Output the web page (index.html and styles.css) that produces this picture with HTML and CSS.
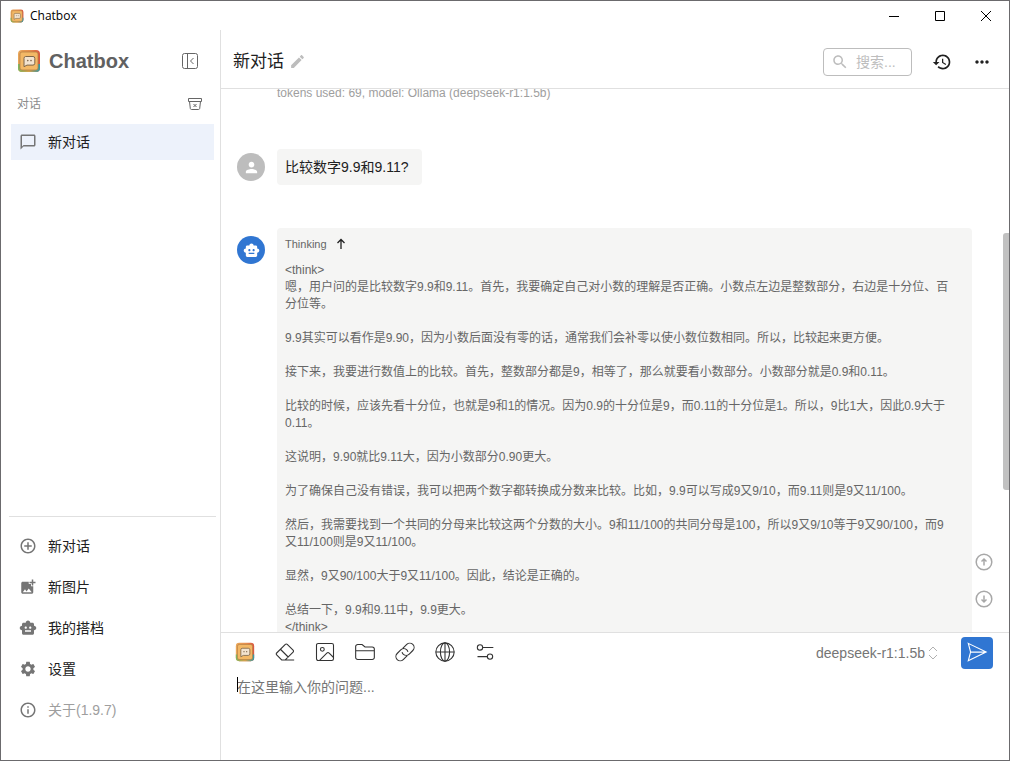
FILE: index.html
```html
<!DOCTYPE html>
<html lang="zh-CN">
<head>
<meta charset="utf-8">
<meta name="viewport" content="width=device-width, initial-scale=1">
<title>Chatbox</title>
<link rel="stylesheet" href="styles.css">
</head>
<body>
<svg class="sprite" aria-hidden="true">
  <defs>
    <linearGradient id="frame" x1="0" y1="0" x2="1" y2="0">
      <stop offset="0" stop-color="#e9a85a"/><stop offset=".6" stop-color="#e58a4c"/><stop offset="1" stop-color="#d9553f"/>
    </linearGradient>
    <linearGradient id="base" x1="0" y1="0" x2="1" y2="0">
      <stop offset="0" stop-color="#7bb661"/><stop offset=".5" stop-color="#d8a04a"/><stop offset="1" stop-color="#2f9aa8"/>
    </linearGradient>
  </defs>
  <symbol id="logo" viewBox="0 0 24 24">
    <rect x="1" y="1" width="22" height="22" rx="4" fill="url(#frame)"/>
    <path d="M1 15h22v4a4 4 0 0 1-4 4H5a4 4 0 0 1-4-4z" fill="url(#base)"/>
    <rect x="3" y="3" width="18" height="18" rx="2" fill="#f3b866" stroke="#b07a40" stroke-width=".7"/>
    <path d="M8.500 7.500h7.500a1.800 1.800 0 0 1 1.800 1.800v5a1.800 1.800 0 0 1-1.800 1.800H10l-3 1.600V9.300a1.800 1.800 0 0 1 1.500-1.800z" fill="#f3e3cf" stroke="#7d6549" stroke-width="1"/>
    <circle cx="10.800" cy="11.600" r=".8" fill="#7d6549"/><circle cx="14" cy="11.600" r=".8" fill="#7d6549"/>
  </symbol>
  <symbol id="robot" viewBox="0 0 24 24"><path d="M20 9V7c0-1.100-.9-2-2-2h-3c0-1.660-1.340-3-3-3S9 3.340 9 5H6c-1.100 0-2 .9-2 2v2c-1.660 0-3 1.340-3 3s1.340 3 3 3v4c0 1.100.9 2 2 2h12c1.100 0 2-.9 2-2v-4c1.660 0 3-1.340 3-3s-1.340-3-3-3zM7.500 11.500c0-.83.67-1.500 1.500-1.500s1.500.67 1.500 1.500S9.830 13 9 13s-1.500-.67-1.500-1.500zM16 17H8v-2h8v2zm-1-4c-.83 0-1.500-.67-1.500-1.500S14.170 10 15 10s1.500.67 1.500 1.500S15.830 13 15 13z"/></symbol>
</svg>

<div class="window">
  <div class="titlebar">
    <svg class="titlebar-logo"><use href="#logo"/></svg>
    <span class="titlebar-name">Chatbox</span>
    <button class="win-btn" aria-label="最小化"><svg class="win-icon" viewBox="0 0 12 12"><path d="M1 6.500h10"/></svg></button>
    <button class="win-btn" aria-label="最大化"><svg class="win-icon" viewBox="0 0 12 12"><path d="M1.500 1.500h9v9h-9z"/></svg></button>
    <button class="win-btn" aria-label="关闭"><svg class="win-icon" viewBox="0 0 12 12"><path d="M1 1l10 10M11 1L1 11"/></svg></button>
  </div>

  <div class="app">
    <aside class="sidebar">
      <div class="brand">
        <svg class="brand-logo"><use href="#logo"/></svg>
        <h1 class="brand-name">Chatbox</h1>
        <button class="icon-btn" aria-label="收起侧栏"><svg class="line-icon" viewBox="0 0 20 20"><rect x="2.500" y="2.500" width="15" height="15" rx="2"/><path d="M7.500 2.500v15M13.500 7L10.500 10l3 3"/></svg></button>
      </div>
      <div class="section-head">
        <h2 class="section-title">对话</h2>
        <button class="icon-btn" aria-label="清空对话"><svg class="archive-icon" viewBox="0 0 16 16"><path d="M1.500 2.500h13v3h-13zM2.500 5.500l.8 7a1.300 1.300 0 0 0 1.300 1h6.800a1.300 1.300 0 0 0 1.300-1l.8-7M6.500 8l3 3M9.500 8l-3 3"/></svg></button>
      </div>
      <nav class="sessions">
        <a class="nav-item current" href="#session"><svg class="nav-icon" viewBox="0 0 24 24"><path d="M20 2H4c-1.100 0-2 .9-2 2v18l4-4h14c1.100 0 2-.9 2-2V4c0-1.100-.9-2-2-2zm0 14H6l-2 2V4h16v12z"/></svg>新对话</a>
      </nav>
      <nav class="menu">
        <a class="nav-item" href="#new-chat"><svg class="nav-icon" viewBox="0 0 24 24"><path d="M13 7h-2v4H7v2h4v4h2v-4h4v-2h-4V7zm-1-5C6.480 2 2 6.480 2 12s4.480 10 10 10 10-4.480 10-10S17.520 2 12 2zm0 18c-4.410 0-8-3.590-8-8s3.590-8 8-8 8 3.590 8 8-3.590 8-8 8z"/></svg>新对话</a>
        <a class="nav-item" href="#new-image"><svg class="nav-icon" viewBox="0 0 24 24"><path d="M19 7v2.990s-1.990.01-2 0V7h-3s.01-1.990 0-2h3V2h2v3h3v2h-3zm-3 4V8h-3V5H5c-1.100 0-2 .9-2 2v12c0 1.100.9 2 2 2h12c1.100 0 2-.9 2-2v-8h-3zM5 19l3-4 2 3 3-4 4 5H5z"/></svg>新图片</a>
        <a class="nav-item" href="#copilots"><svg class="nav-icon"><use href="#robot"/></svg>我的搭档</a>
        <a class="nav-item" href="#settings"><svg class="nav-icon" viewBox="0 0 24 24"><path d="M19.140 12.940c.04-.3.06-.61.06-.94 0-.32-.02-.64-.07-.94l2.030-1.580c.18-.14.23-.41.12-.61l-1.920-3.320c-.12-.22-.37-.29-.59-.22l-2.390.96c-.5-.38-1.030-.7-1.620-.94l-.36-2.540c-.04-.24-.24-.41-.48-.41h-3.840c-.24 0-.43.17-.47.41l-.36 2.540c-.59.24-1.130.57-1.620.94l-2.390-.96c-.22-.08-.47 0-.59.22L2.740 8.870c-.12.21-.08.47.12.61l2.030 1.580c-.05.3-.09.63-.09.94s.02.64.07.94l-2.030 1.580c-.18.14-.23.41-.12.61l1.920 3.320c.12.22.37.29.59.22l2.390-.96c.5.38 1.030.7 1.620.94l.36 2.540c.05.24.24.41.48.41h3.840c.24 0 .44-.17.47-.41l.36-2.540c.59-.24 1.130-.56 1.620-.94l2.390.96c.22.08.47 0 .59-.22l1.920-3.320c.12-.22.07-.47-.12-.61l-2.010-1.580zM12 15.600c-1.980 0-3.600-1.620-3.600-3.600s1.620-3.600 3.600-3.600 3.600 1.620 3.600 3.600-1.620 3.600-3.600 3.600z"/></svg>设置</a>
        <a class="nav-item muted" href="#about"><svg class="nav-icon" viewBox="0 0 24 24"><path d="M11 7h2v2h-2zm0 4h2v6h-2zm1-9C6.480 2 2 6.480 2 12s4.480 10 10 10 10-4.480 10-10S17.520 2 12 2zm0 18c-4.410 0-8-3.590-8-8s3.590-8 8-8 8 3.590 8 8-3.590 8-8 8z"/></svg>关于(1.9.7)</a>
      </nav>
    </aside>

    <main class="chat">
      <header class="chat-head">
        <h2 class="chat-title">新对话</h2>
        <button class="icon-btn edit" aria-label="编辑标题"><svg class="edit-icon" viewBox="0 0 24 24"><path d="M3 17.250V21h3.750L17.810 9.940l-3.750-3.750L3 17.250zM20.710 7.040c.39-.39.39-1.020 0-1.410l-2.340-2.340c-.39-.39-1.020-.39-1.410 0l-1.830 1.830 3.750 3.750 1.830-1.830z"/></svg></button>
        <label class="search">
          <svg class="search-icon" viewBox="0 0 24 24"><path d="M15.500 14h-.79l-.28-.27C15.410 12.590 16 11.110 16 9.500 16 5.910 13.090 3 9.500 3S3 5.910 3 9.500 5.910 16 9.500 16c1.610 0 3.090-.59 4.230-1.570l.27.28v.79l5 4.990L20.490 19l-4.990-5zm-6 0C7.010 14 5 11.990 5 9.500S7.010 5 9.500 5 14 7.010 14 9.500 11.990 14 9.500 14z"/></svg>
          <input class="search-input" type="text" placeholder="搜索..." aria-label="搜索">
        </label>
        <button class="icon-btn head-btn" aria-label="历史"><svg class="head-icon" viewBox="0 0 24 24"><path d="M13 3c-4.970 0-9 4.030-9 9H1l3.890 3.890.07.14L9 12H6c0-3.870 3.130-7 7-7s7 3.130 7 7-3.130 7-7 7c-1.930 0-3.680-.79-4.940-2.060l-1.420 1.420C8.270 19.990 10.510 21 13 21c4.970 0 9-4.030 9-9s-4.030-9-9-9zm-1 5v5l4.280 2.540.72-1.210-3.500-2.080V8H12z"/></svg></button>
        <button class="icon-btn head-btn" aria-label="更多"><svg class="head-icon" viewBox="0 0 24 24"><path d="M6 10c-1.100 0-2 .9-2 2s.9 2 2 2 2-.9 2-2-.9-2-2-2zm12 0c-1.100 0-2 .9-2 2s.9 2 2 2 2-.9 2-2-.9-2-2-2zm-6 0c-1.100 0-2 .9-2 2s.9 2 2 2 2-.9 2-2-.9-2-2-2z"/></svg></button>
      </header>

      <div class="messages-wrap">
        <div class="messages">
          <p class="usage">tokens used: 69, model: Ollama (deepseek-r1:1.5b)</p>
          <article class="message">
            <span class="avatar user"><svg class="avatar-icon" viewBox="0 0 24 24"><path d="M12 12c2.210 0 4-1.790 4-4s-1.790-4-4-4-4 1.790-4 4 1.790 4 4 4zm0 2c-2.670 0-8 1.340-8 4v2h16v-2c0-2.660-5.330-4-8-4z"/></svg></span>
            <div class="bubble question">比较数字9.9和9.11?</div>
          </article>
          <article class="message">
            <span class="avatar bot"><svg class="avatar-icon"><use href="#robot"/></svg></span>
            <div class="bubble answer">
              <button class="thinking">Thinking<svg class="thinking-icon" viewBox="0 0 12 12"><path d="M6 11V1.500M2.500 5L6 1.500 9.500 5"/></svg></button>
              <div class="thought">
                <p class="thought-text">&lt;think&gt;<br>嗯，用户问的是比较数字9.9和9.11。首先，我要确定自己对小数的理解是否正确。小数点左边是整数部分，右边是十分位、百分位等。</p>
                <p class="thought-text">9.9其实可以看作是9.90，因为小数后面没有零的话，通常我们会补零以使小数位数相同。所以，比较起来更方便。</p>
                <p class="thought-text">接下来，我要进行数值上的比较。首先，整数部分都是9，相等了，那么就要看小数部分。小数部分就是0.9和0.11。</p>
                <p class="thought-text">比较的时候，应该先看十分位，也就是9和1的情况。因为0.9的十分位是9，而0.11的十分位是1。所以，9比1大，因此0.9大于0.11。</p>
                <p class="thought-text">这说明，9.90就比9.11大，因为小数部分0.90更大。</p>
                <p class="thought-text">为了确保自己没有错误，我可以把两个数字都转换成分数来比较。比如，9.9可以写成9又9/10，而9.11则是9又11/100。</p>
                <p class="thought-text">然后，我需要找到一个共同的分母来比较这两个分数的大小。9和11/100的共同分母是100，所以9又9/10等于9又90/100，而9又11/100则是9又11/100。</p>
                <p class="thought-text">显然，9又90/100大于9又11/100。因此，结论是正确的。</p>
                <p class="thought-text">总结一下，9.9和9.11中，9.9更大。<br>&lt;/think&gt;</p>
              </div>
            </div>
          </article>
        </div>
        <div class="scroll-thumb"></div>
        <div class="jump">
          <button class="icon-btn" aria-label="回到顶部"><svg class="jump-icon" viewBox="0 0 20 20"><circle cx="10" cy="10" r="7.800"/><path d="M10 13.500V7.500M7.500 9.500L10 7l2.500 2.500"/></svg></button>
          <button class="icon-btn" aria-label="回到底部"><svg class="jump-icon" viewBox="0 0 20 20"><circle cx="10" cy="10" r="7.800"/><path d="M10 6.500v6M7.500 10.500L10 13l2.500-2.500"/></svg></button>
        </div>
      </div>

      <form class="composer">
        <div class="toolbar">
          <button type="button" class="tool" aria-label="Chatbox"><svg class="tool-icon"><use href="#logo"/></svg></button>
          <button type="button" class="tool" aria-label="清除"><svg class="tool-icon line" viewBox="0 0 24 24"><path d="M23 21.500H8L2 15.500a1.600 1.600 0 0 1 0-2.300L12.400 2.800a1.600 1.600 0 0 1 2.300 0l7 7a1.600 1.600 0 0 1 0 2.300L12.300 21.500M6.500 8.700l9.300 9.300"/></svg></button>
          <button type="button" class="tool" aria-label="图片"><svg class="tool-icon line" viewBox="0 0 24 24"><rect x="1.800" y="1.800" width="20.400" height="20.400" rx="2"/><circle cx="8.800" cy="8.800" r="2.300"/><path d="M5.500 22l8.700-8.700a2 2 0 0 1 2.800 0l5 5"/></svg></button>
          <button type="button" class="tool" aria-label="文件"><svg class="tool-icon line" viewBox="0 0 24 24"><path d="M.8 18.500v-13a2.500 2.500 0 0 1 2.500-2.500H8.500l3.500 3h8.700a2.500 2.500 0 0 1 2.500 2.500v10a2.500 2.500 0 0 1-2.500 2.500H3.300a2.500 2.500 0 0 1-2.500-2.500zM.8 10.500h22.400"/></svg></button>
          <button type="button" class="tool" aria-label="链接"><svg class="tool-icon line" viewBox="0 0 24 24"><path d="M9.300 7.700l4.800-4.800a5.200 5.200 0 0 1 7.300 0a5.200 5.200 0 0 1 0 7.300l-4.300 4.300a5.200 5.200 0 0 1-7.300 0a5 5 0 0 1-1.300-2.300M14.700 16.300l-4.800 4.800a5.200 5.200 0 0 1-7.300 0a5.200 5.200 0 0 1 0-7.300l4.300-4.300a5.200 5.200 0 0 1 7.300 0a5 5 0 0 1 1.300 2.300"/></svg></button>
          <button type="button" class="tool" aria-label="联网"><svg class="tool-icon line" viewBox="0 0 24 24"><circle cx="12" cy="12" r="11"/><ellipse cx="12" cy="12" rx="5.500" ry="11"/><path d="M12 1v22M1 12h22"/></svg></button>
          <button type="button" class="tool" aria-label="调整"><svg class="tool-icon line" viewBox="0 0 24 24"><circle cx="6" cy="6.500" r="3.200"/><circle cx="18" cy="17.500" r="3.200"/><path d="M9.200 6.500H22M3 17.500h11.800"/></svg></button>
          <span class="model">
            <select class="model-select" aria-label="模型"><option>deepseek-r1:1.5b</option></select>
            <svg class="model-icon" viewBox="0 0 10 14"><path d="M1 5L5 1l4 4M1 9l4 4 4-4"/></svg>
          </span>
          <button type="button" class="send" aria-label="发送"><svg class="send-icon" viewBox="0 0 24 24"><path d="M2.500 1.500L22 11 2.500 20.500 5 11zM5 11H22"/></svg></button>
        </div>
        <div class="prompt-box">
          <textarea class="prompt" placeholder="在这里输入你的问题..." aria-label="问题"></textarea>
          <span class="caret"></span>
        </div>
      </form>
    </main>
  </div>
</div>
</body>
</html>
```
FILE: styles.css
```css
* { box-sizing: border-box; }

body {
  margin: 0;
  color: #212121;
  background: #fff;
  font: 14px/20px "Liberation Sans", "Noto Sans CJK SC", sans-serif;
}

h1, h2, p { margin: 0; }

button, input, textarea, select { font: inherit; color: inherit; }

button {
  display: flex;
  align-items: center;
  justify-content: center;
  padding: 0;
  border: 0;
  background: none;
  cursor: pointer;
}

svg { display: block; flex: none; fill: currentColor; }

.sprite { position: absolute; width: 0; height: 0; }

.window {
  display: flex;
  flex-direction: column;
  height: 100vh;
  border: 1px solid #6b6a6d;
}

/* Title bar */
.titlebar { display: flex; align-items: center; height: 29px; padding-left: 9px; }
.titlebar-logo { width: 14px; height: 14px; }
.titlebar-name {
  flex: 1;
  padding-left: 6px;
  color: #000;
  font: 12px/16px "Open Sans", sans-serif;
}
.win-btn { width: 46px; height: 29px; }
.win-icon { width: 12px; height: 12px; fill: none; stroke: #000; }

.app { display: flex; flex: 1; min-height: 0; }

/* Sidebar */
.sidebar {
  display: flex;
  flex-direction: column;
  width: 220px;
  border-right: 1px solid #e0e0e0;
}
.brand { display: flex; align-items: center; height: 62px; padding: 0 20px 0 16px; }
.brand-logo { width: 24px; height: 24px; }
.brand-name { flex: 1; padding-left: 8px; color: #616161; font-size: 20px; line-height: 24px; }
.icon-btn { color: #666; }
.line-icon { width: 20px; height: 20px; fill: none; stroke: currentColor; }
.section-head {
  display: flex;
  align-items: center;
  justify-content: space-between;
  height: 24px;
  padding: 0 17px 0 16px;
}
.section-title { color: #8c8c8c; font-size: 12px; font-weight: 400; }
.archive-icon { width: 16px; height: 16px; fill: none; stroke: currentColor; }
.sessions { flex: 1; padding: 8px 6px 0 10px; }
.nav-item {
  display: flex;
  align-items: center;
  gap: 11px;
  height: 36px;
  padding-left: 8px;
  color: #212121;
  text-decoration: none;
}
.nav-icon { width: 18px; height: 18px; color: #757575; }
.nav-item.current { background: #edf2fb; }
.nav-item.muted { color: #9e9e9e; }
.menu {
  display: flex;
  flex-direction: column;
  gap: 5px;
  margin: 0 4px 0 8px;
  padding: 11px 2px 32px;
  border-top: 1px solid #e0e0e0;
}

/* Conversation */
.chat { display: flex; flex: 1; flex-direction: column; min-width: 0; }
.chat-head {
  display: flex;
  align-items: center;
  height: 59px;
  padding: 5px 17px 0 12px;
  border-bottom: 1px solid #e0e0e0;
}
.chat-title { font-size: 17px; font-weight: 400; line-height: 24px; }
.edit { margin: 0 auto 0 5px; color: #bdbdbd; }
.edit-icon { width: 17px; height: 17px; }
.search {
  display: flex;
  align-items: center;
  width: 89px;
  height: 28px;
  padding-left: 7px;
  border: 1px solid #bdbdbd;
  border-radius: 4px;
}
.search-icon { width: 18px; height: 18px; color: #bdbdbd; }
.search-input {
  width: 48px;
  margin-left: 7px;
  padding: 0;
  border: 0;
  outline: 0;
  background: none;
}
.search-input::placeholder { color: #bdbdbd; opacity: 1; }
.head-btn { width: 20px; margin-left: 20px; color: #212121; }
.head-icon { width: 20px; height: 20px; }

.messages-wrap { position: relative; flex: 1; min-height: 0; }
.messages { height: 100%; padding: 0 37px 0 16px; overflow: hidden; }
.usage {
  margin-top: -6px;
  padding-left: 40px;
  color: #9e9e9e;
  font-size: 12px;
}
.message { display: flex; align-items: flex-start; gap: 12px; margin-top: 43px; }
.usage + .message { margin-top: 46px; }
.avatar {
  display: flex;
  flex: none;
  align-items: center;
  justify-content: center;
  width: 28px;
  height: 28px;
  margin-top: 8px;
  border-radius: 50%;
  color: #fff;
}
.user { margin-top: 4px; background: #bdbdbd; }
.bot { background: #3076d2; }
.avatar-icon { width: 17px; height: 17px; }
.bubble { padding: 8px; border-radius: 4px; background: #f5f5f4; }
.question { padding-right: 14px; }
.answer { flex: 1; padding-right: 20px; }
.thinking { gap: 8px; height: 16px; color: #666; font-size: 11px; line-height: 16px; }
.thinking-icon { width: 12px; height: 12px; fill: none; stroke: #212121; stroke-width: 1.3; }
.thought {
  display: flex;
  flex-direction: column;
  gap: 17px;
  margin-top: 10px;
  color: #666;
  font-size: 12px;
  line-height: 17px;
}

.scroll-thumb {
  position: absolute;
  top: 144px;
  right: 0;
  width: 6px;
  height: 257px;
  border-radius: 3px 0 0 3px;
  background: #c1c1c1;
}
.jump {
  position: absolute;
  right: 15px;
  bottom: 23px;
  display: flex;
  flex-direction: column;
  gap: 17px;
}
.jump .icon-btn { color: #a8a8a8; }
.jump-icon { width: 20px; height: 20px; fill: none; stroke: currentColor; stroke-width: 1.5; }

/* Composer */
.composer {
  display: flex;
  flex-direction: column;
  height: 128px;
  padding: 4px 16px 8px;
  border-top: 1px solid #e0e0e0;
}
.toolbar { display: flex; align-items: center; height: 32px; }
.tool { width: 20px; height: 22px; margin: 0 22px 0 -2px; padding-bottom: 2px; color: #333; }
.tool-icon { width: 20px; height: 20px; }
.tool-icon.line { fill: none; stroke: currentColor; stroke-width: 1.3; }
.model { display: flex; align-items: center; gap: 3px; margin-left: auto; color: #757575; }
.model-select {
  appearance: none;
  padding: 0;
  border: 0;
  background: none;
}
.model-icon { width: 10px; height: 14px; fill: none; stroke: #b0b0b0; }
.send {
  width: 32px;
  height: 32px;
  margin-left: 23px;
  border-radius: 4px;
  background: #3076d2;
  color: #fff;
}
.send-icon { width: 22px; height: 22px; fill: none; stroke: currentColor; stroke-width: 1.2; }
.prompt-box { position: relative; display: flex; flex: 1; margin-top: 8px; }
.prompt {
  flex: 1;
  padding: 0;
  border: 0;
  outline: 0;
  resize: none;
  background: none;
}
.prompt::placeholder { color: #757575; opacity: 1; }
.caret { position: absolute; top: 0; left: 0; width: 1px; height: 15px; background: #000; }
```
